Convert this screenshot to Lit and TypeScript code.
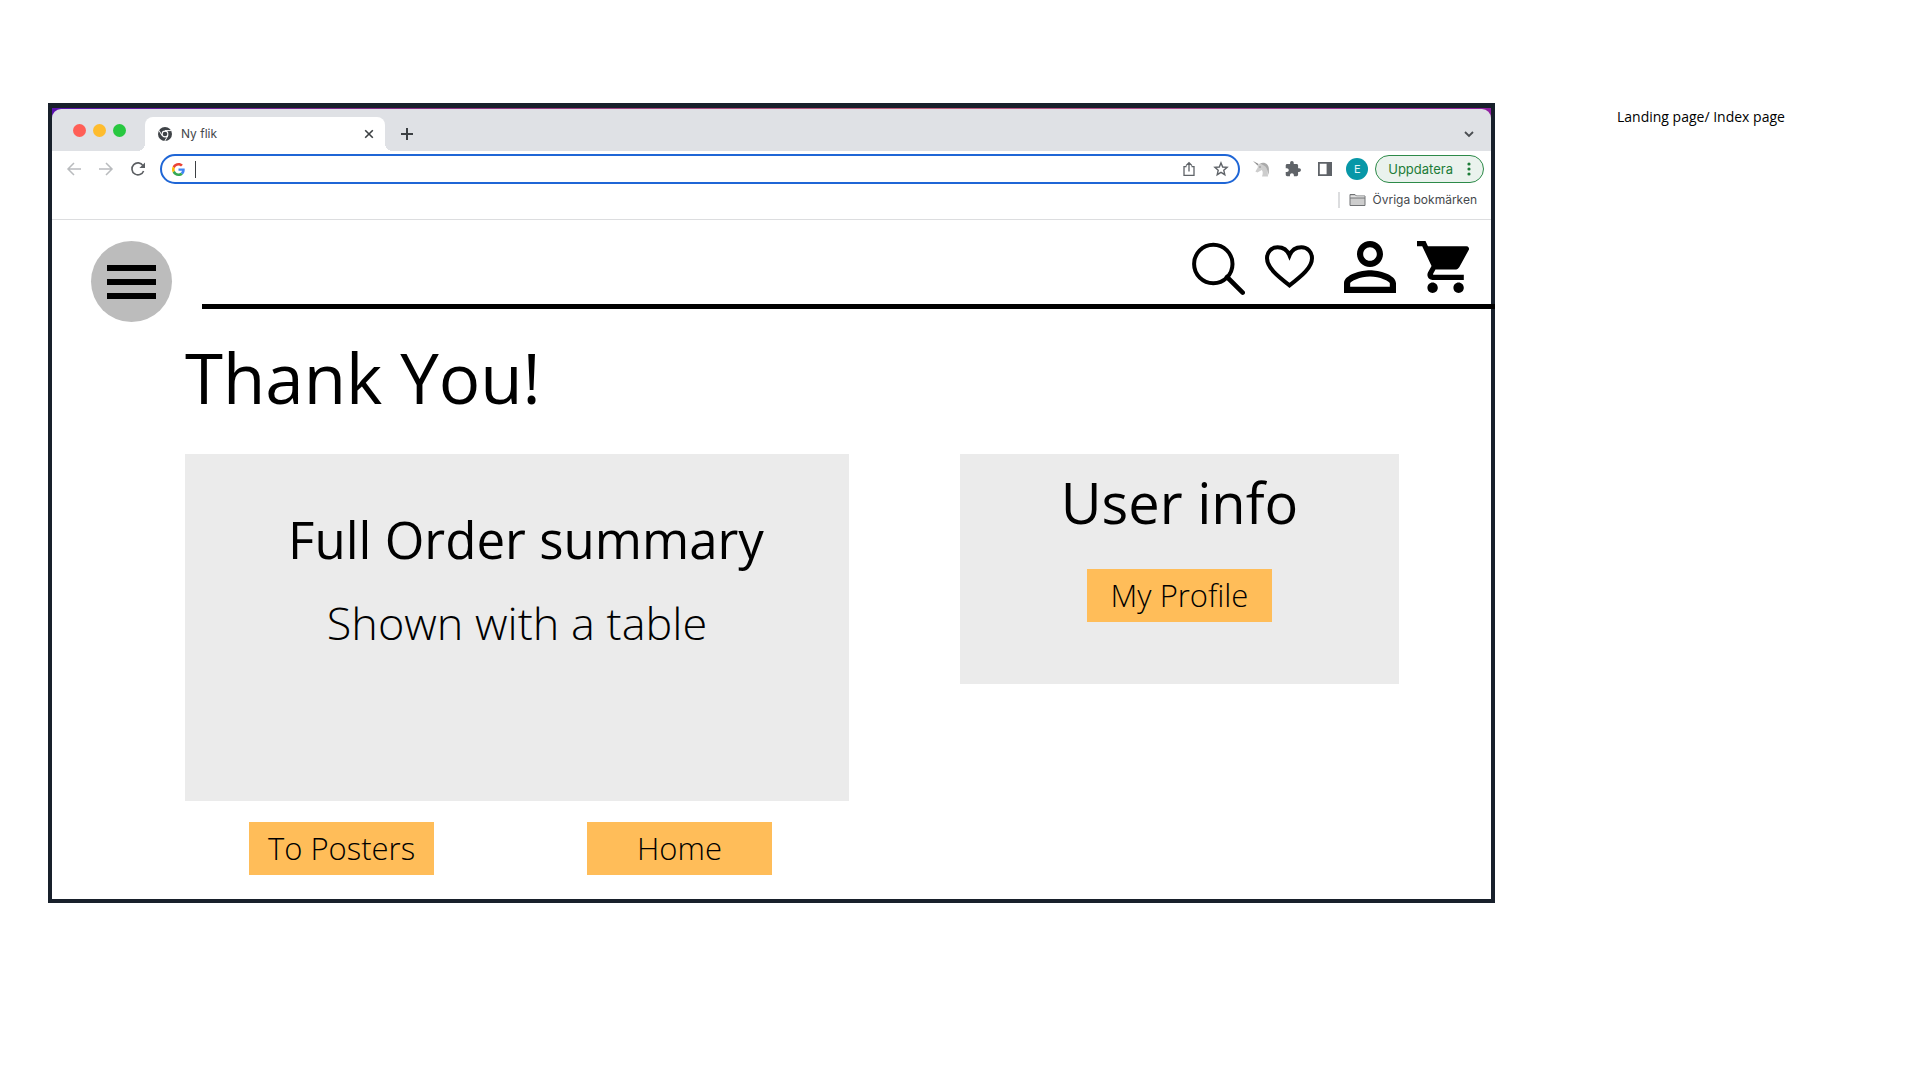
import { LitElement, html, css, svg } from "lit";
import { customElement } from "lit/decorators.js";

@customElement("browser-chrome")
export class BrowserChrome extends LitElement {
  static styles = css`
    :host {
      display: block;
      font-family: Inter, Roboto, "Liberation Sans", sans-serif;
      color: #45484c;
    }
    * {
      box-sizing: border-box;
    }
    button {
      display: flex;
      align-items: center;
      justify-content: center;
      margin: 0;
      padding: 0;
      border: 0;
      background: none;
      color: inherit;
      font: inherit;
    }
    svg {
      display: block;
      flex: none;
    }
    .backdrop {
      padding-top: 1px;
      background: linear-gradient(90deg, #5b12b0, #8a2a86 25%, #c4607c 60%, #8f1fa0);
    }
    .strip {
      display: flex;
      align-items: flex-end;
      height: 42px;
      padding-left: 21px;
      padding-right: 16px;
      border-radius: 9px 9px 0 0;
      background: #dfe1e5;
    }
    .lights {
      display: flex;
      gap: 7px;
      width: 72px;
      align-self: center;
    }
    .light {
      width: 13px;
      height: 13px;
      border-radius: 50%;
    }
    .red {
      background: #ff5f57;
    }
    .yellow {
      background: #febc2e;
    }
    .green {
      background: #28c840;
    }
    .tab {
      position: relative;
      display: flex;
      align-items: center;
      width: 240px;
      height: 34px;
      padding: 0 11px 0 13px;
      border-radius: 8px 8px 0 0;
      background: #fff;
      font-size: 12px;
      line-height: 16px;
    }
    .tab::before,
    .tab::after {
      content: "";
      position: absolute;
      bottom: 0;
      width: 8px;
      height: 8px;
    }
    .tab::before {
      right: 100%;
      background: radial-gradient(circle at 0 0, transparent 8px, #fff 8px);
    }
    .tab::after {
      left: 100%;
      background: radial-gradient(circle at 100% 0, transparent 8px, #fff 8px);
    }
    .tab-title {
      flex: 1;
      padding-left: 9px;
    }
    .new-tab {
      height: 34px;
      margin-left: 15px;
    }
    .tab-list {
      height: 34px;
      margin-left: auto;
    }
    .toolbar {
      display: flex;
      align-items: center;
      height: 36px;
      padding: 0 7px 0 14px;
      background: #fff;
    }
    .nav {
      display: flex;
      gap: 16px;
      width: 94px;
      color: #b9bbbe;
    }
    .reload {
      color: #5b5e62;
    }
    .omnibox {
      display: flex;
      flex: 1;
      align-items: center;
      height: 30px;
      padding: 0 9px 0 10px;
      border: 2px solid #1f66d6;
      border-radius: 15px;
      color: #5f6368;
    }
    .caret {
      width: 1px;
      height: 17px;
      margin-left: 10px;
      background: #3c4043;
    }
    .address {
      flex: 1;
      min-width: 0;
      padding: 0 4px;
      border: 0;
      outline: 0;
      background: none;
      font: inherit;
      font-size: 13px;
    }
    .page-actions {
      display: flex;
      gap: 16px;
    }
    .extensions {
      display: flex;
      align-items: center;
      gap: 16px;
      padding-left: 13px;
      color: #5f6368;
    }
    .avatar {
      width: 22px;
      height: 22px;
      margin: 0 7px 0 13px;
      border-radius: 50%;
      background: #0797a7;
      color: #e6f6f7;
      font-size: 11px;
    }
    .update {
      gap: 14px;
      height: 28px;
      padding: 0 12px;
      border: 1px solid #2c8a48;
      border-radius: 14px;
      background: #eaf2ed;
      color: #1c7c38;
      font-size: 13px;
      line-height: 16px;
    }
    .bookmarks {
      display: flex;
      align-items: center;
      justify-content: flex-end;
      height: 33px;
      padding: 0 14px 6px 0;
      border-bottom: 1px solid #dcdddf;
      background: #fff;
    }
    .divider {
      width: 2px;
      height: 16px;
      margin-right: 9px;
      background: #dcdddf;
    }
    .folder {
      gap: 7px;
      font-size: 12px;
      line-height: 16px;
    }
  `;

  render() {
    return html`
      <div class="backdrop">
        <div class="strip">
          <div class="lights">
            <span class="light red"></span>
            <span class="light yellow"></span>
            <span class="light green"></span>
          </div>
          <div class="tab">
            <svg width="14" height="14" viewBox="0 0 14 14">
              <circle cx="7" cy="7" r="7" fill="#3f4347" />
              <circle cx="7" cy="7" r="3.4" fill="#fff" />
              <path d="M7 3.6H13.2M4.1 8.7L1 3.4M9.900 8.700L6.800 14" stroke="#fff" stroke-width="1" />
              <circle cx="7" cy="7" r="2.3" fill="#3f4347" />
            </svg>
            <span class="tab-title">Ny flik</span>
            <button aria-label="Close tab">
              <svg width="10" height="10" viewBox="0 0 10 10" fill="none" stroke="#3c4043" stroke-width="1.6">
                <path d="M1.2 1.2L8.800 8.800M8.800 1.200L1.200 8.800" />
              </svg>
            </button>
          </div>
          <button class="new-tab" aria-label="New tab">
            <svg width="14" height="14" viewBox="0 0 14 14" fill="none" stroke="#3c4043" stroke-width="2">
              <path d="M7 1V13M1 7H13" />
            </svg>
          </button>
          <button class="tab-list" aria-label="Search tabs">
            <svg width="12" height="10" viewBox="0 0 12 10" fill="none" stroke="#4a4d51" stroke-width="1.8">
              <path d="M2 3L6 7L10 3" />
            </svg>
          </button>
        </div>
      </div>
      <div class="toolbar">
        <div class="nav">
          <button aria-label="Back">
            <svg width="16" height="16" viewBox="0 0 16 16" fill="none" stroke="currentColor" stroke-width="1.5">
              <path d="M15 8H2.400M8 2L2 8L8 14" />
            </svg>
          </button>
          <button aria-label="Forward">
            <svg width="16" height="16" viewBox="0 0 16 16" fill="none" stroke="currentColor" stroke-width="1.5">
              <path d="M1 8H13.600M8 2L14 8L8 14" />
            </svg>
          </button>
          <button class="reload" aria-label="Reload">
            <svg width="16" height="16" viewBox="0 0 16 16" fill="none" stroke="currentColor" stroke-width="1.6">
              <path d="M13 4.600A6 6 0 1 0 13.600 10" />
              <path d="M15 1.400V7H9.400Z" fill="currentColor" stroke="none" />
            </svg>
          </button>
        </div>
        <div class="omnibox">
          <svg width="13" height="13" viewBox="0 0 48 48">
            <path fill="#ea4335" d="M24 9.5c3.54 0 6.71 1.22 9.21 3.6l6.85-6.85C35.9 2.38 30.47 0 24 0 14.62 0 6.51 5.38 2.56 13.22l7.98 6.19C12.43 13.72 17.74 9.5 24 9.5z" />
            <path fill="#4285f4" d="M46.98 24.55c0-1.57-.15-3.09-.38-4.55H24v9.02h12.94c-.58 2.96-2.26 5.48-4.78 7.18l7.73 6c4.51-4.18 7.09-10.36 7.09-17.65z" />
            <path fill="#fbbc05" d="M10.53 28.59c-.48-1.45-.76-2.99-.76-4.59s.27-3.14.76-4.59l-7.98-6.19C.92 16.46 0 20.12 0 24s.92 7.54 2.56 10.78l7.97-6.19z" />
            <path fill="#34a853" d="M24 48c6.48 0 11.93-2.13 15.89-5.81l-7.73-6c-2.15 1.45-4.92 2.3-8.16 2.3-6.26 0-11.57-4.22-13.47-9.91l-7.98 6.19C6.51 42.62 14.62 48 24 48z" />
          </svg>
          <span class="caret"></span>
          <input class="address" type="text" aria-label="Address" />
          <div class="page-actions">
            <button aria-label="Share">
              <svg width="16" height="16" viewBox="0 0 16 16" fill="none" stroke="currentColor" stroke-width="1.3">
                <path d="M5.500 5.600H3V14.400H13V5.600H10.500M8 10.500V2M5 4.600L8 1.600L11 4.600" />
              </svg>
            </button>
            <button aria-label="Bookmark">
              <svg width="16" height="16" viewBox="0 0 16 16" fill="none" stroke="currentColor" stroke-width="1.4">
                <path d="M8 1.900L9.700 6L14.100 6.400L10.800 9.300L11.800 13.700L8 11.400L4.200 13.700L5.200 9.300L1.900 6.400L6.300 6Z" />
              </svg>
            </button>
          </div>
        </div>
        <div class="extensions">
          <button aria-label="Unicorn extension">
            <svg width="16" height="16" viewBox="0 0 16 16">
              <path d="M0 0L5.600 3L4.600 4.600Z" fill="#8a8a8a" />
              <path d="M4.800 3.400L7.600 2.200C11.600 1.800 14 4.600 14.600 8.400L15 15.500H9C10 12.600 10 10.800 8.800 9L4.400 11.600L2.400 10.600L4.800 6.400Z" fill="#cdcdcd" />
              <path d="M7.200 2.200C12 .4 15.800 3.400 15.900 8L15.800 14C14.600 11.600 14.400 7.600 12.400 5.600C11 4.200 9 3.600 7.200 2.200Z" fill="#aaa" />
              <circle cx="7" cy="6" r=".7" fill="#777" />
            </svg>
          </button>
          <button aria-label="Extensions">
            <svg width="16" height="16" viewBox="1 1 22 22" fill="currentColor">
              <path d="M20.500 11H19V7c0-1.100-.9-2-2-2h-4V3.500a2.500 2.500 0 0 0-5 0V5H4c-1.100 0-1.990.9-1.990 2v3.800H3.500c1.490 0 2.700 1.210 2.700 2.700s-1.210 2.700-2.700 2.700H2V20c0 1.100.9 2 2 2h3.800v-1.500c0-1.490 1.210-2.700 2.700-2.700s2.700 1.210 2.700 2.700V22H17c1.100 0 2-.9 2-2v-4h1.500a2.500 2.500 0 0 0 0-5z" />
            </svg>
          </button>
          <button aria-label="Side panel">
            <svg width="16" height="16" viewBox="0 0 16 16">
              <path d="M1.900 1.900H14.100V14.100H1.900Z" fill="none" stroke="currentColor" stroke-width="1.800" />
              <path d="M9.600 1.500H14.500V14.500H9.600Z" fill="currentColor" />
            </svg>
          </button>
        </div>
        <button class="avatar">E</button>
        <button class="update">
          Uppdatera
          <svg width="4" height="14" viewBox="0 0 4 14" fill="currentColor">
            <circle cx="2" cy="2" r="1.600" />
            <circle cx="2" cy="7" r="1.600" />
            <circle cx="2" cy="12" r="1.600" />
          </svg>
        </button>
      </div>
      <div class="bookmarks">
        <span class="divider"></span>
        <button class="folder">
          <svg width="17" height="14" viewBox="0 0 17 14">
            <path d="M1 12.500V1.500H6L7.500 3H16V12.500Z" fill="#cdcdcd" stroke="#707274" />
            <path d="M1.500 3.500H15.500V4.500H1.500Z" fill="#f4f4f4" />
            <path d="M1 5H16" stroke="#707274" />
          </svg>
          Övriga bokmärken
        </button>
      </div>
    `;
  }
}

const navIcons = [
  {
    label: "Search",
    width: 53,
    box: "0 0 53 56",
    art: svg`<g fill="none" stroke="#000"><circle cx="21.300" cy="24" r="19.200" stroke-width="4" /><path d="M35 37L50.700 52.600" stroke-width="4.600" stroke-linecap="round" /></g>`,
  },
  {
    label: "Favourites",
    width: 59,
    box: "0 0 59 56",
    art: svg`<path fill="none" stroke="#000" stroke-width="4" d="M24.500 45.400C12 35.600 2 27.500 2 18.200C2 11.800 6.600 7.200 12.600 7.200C18.200 7.200 22.500 10.400 24.500 15.400C26.500 10.400 30.800 7.200 36.400 7.200C42.400 7.200 47 11.800 47 18.200C47 27.500 37 35.600 24.500 45.400Z" />`,
  },
  {
    label: "Account",
    width: 53,
    box: "4 3.69 16.31 17.23",
    art: svg`<path d="M12 5.900c1.160 0 2.100.94 2.100 2.100s-.94 2.100-2.100 2.100S9.900 9.160 9.900 8s.94-2.100 2.100-2.100m0 9c2.970 0 6.100 1.460 6.100 2.100v1.100H5.900V17c0-.64 3.130-2.100 6.100-2.100M12 4C9.790 4 8 5.790 8 8s1.790 4 4 4 4-1.790 4-4-1.790-4-4-4zm0 9c-2.670 0-8 1.340-8 4v3h16v-3c0-2.660-5.330-4-8-4z" />`,
  },
  {
    label: "Cart",
    width: 52,
    box: "1 1.62 20 21.54",
    art: svg`<path d="M7 18c-1.100 0-1.990.9-1.990 2S5.900 22 7 22s2-.9 2-2-.9-2-2-2zM1 2v2h2l3.600 7.590-1.350 2.450c-.16.28-.25.61-.25.96 0 1.100.9 2 2 2h12v-2H7.420c-.14 0-.25-.11-.25-.25l.03-.12.9-1.630h7.450c.75 0 1.410-.41 1.750-1.030l3.580-6.490A1.003 1.003 0 0 0 20 4H5.210l-.94-2H1zm16 16c-1.100 0-1.990.9-1.990 2s.89 2 1.990 2 2-.9 2-2-.9-2-2-2z" />`,
  },
];

@customElement("app-root")
export class AppRoot extends LitElement {
  static styles = css`
    :host {
      display: flex;
      align-items: flex-start;
      padding: 103px 0 103px 48px;
      background: #fff;
      color: #000;
      font-family: "Open Sans", "Noto Sans", sans-serif;
    }
    * {
      box-sizing: border-box;
    }
    h1,
    h2,
    p {
      margin: 0;
      font-weight: 400;
    }
    button {
      margin: 0;
      padding: 0;
      border: 0;
      background: none;
      color: inherit;
      font: inherit;
    }
    svg {
      display: block;
    }
    .window {
      flex: 1;
      min-width: 0;
      border: 4px solid #18202b;
      border-top-width: 5px;
    }
    .header {
      display: flex;
      align-items: flex-start;
      gap: 30px;
      margin-right: -4px;
      padding-left: 39px;
    }
    .menu {
      display: flex;
      flex-direction: column;
      align-items: center;
      justify-content: center;
      gap: 8px;
      width: 81px;
      height: 81px;
      margin-top: 21px;
      border-radius: 50%;
      background: #bcbcbc;
    }
    .bar {
      width: 49px;
      height: 6px;
      background: #000;
    }
    .icons {
      display: flex;
      flex: 1;
      justify-content: flex-end;
      gap: 20px;
      padding: 20px 26px 8px 0;
      border-bottom: 5px solid #000;
    }
    .content {
      padding: 15px 92px 24px 133px;
    }
    .title {
      margin-bottom: 37px;
      font-size: 69px;
      line-height: 80px;
    }
    .columns {
      display: grid;
      grid-template-columns: 664fr 439fr;
      align-items: start;
      gap: 111px;
    }
    .card {
      display: flex;
      flex-direction: column;
      align-items: center;
      background: #ebebeb;
    }
    .order {
      gap: 22px;
      min-height: 347px;
      padding: 53px 0 0;
    }
    .order-title {
      padding-left: 18px;
      font-size: 51px;
      line-height: 64px;
    }
    .order-text {
      font-size: 45px;
      line-height: 60px;
      font-weight: 300;
    }
    .user {
      gap: 35px;
      min-height: 230px;
      padding-top: 16px;
    }
    .user-title {
      font-size: 56px;
      line-height: 64px;
    }
    .action {
      display: block;
      width: 185px;
      background: #ffbd59;
      color: #000;
      font-size: 31px;
      font-weight: 300;
      line-height: 53px;
      text-align: center;
      text-decoration: none;
    }
    .actions {
      display: flex;
      justify-content: space-between;
      padding: 21px 77px 0 64px;
    }
    .note {
      width: 425px;
      padding: 4px 0 0 122px;
      font-size: 14px;
      line-height: 20px;
    }
  `;

  render() {
    return html`
      <div class="window">
        <browser-chrome></browser-chrome>
        <header class="header">
          <button class="menu" aria-label="Menu">
            <span class="bar"></span>
            <span class="bar"></span>
            <span class="bar"></span>
          </button>
          <nav class="icons">
            ${navIcons.map(
              (icon) => html`<button aria-label=${icon.label}>
                <svg width=${icon.width} height="56" viewBox=${icon.box}>${icon.art}</svg>
              </button>`
            )}
          </nav>
        </header>
        <main class="content">
          <h1 class="title">Thank You!</h1>
          <div class="columns">
            <div>
              <section class="card order">
                <h2 class="order-title">Full Order summary</h2>
                <p class="order-text">Shown with a table</p>
              </section>
              <div class="actions">
                <a class="action" href="#posters">To Posters</a>
                <a class="action" href="#home">Home</a>
              </div>
            </div>
            <section class="card user">
              <h2 class="user-title">User info</h2>
              <a class="action" href="#profile">My Profile</a>
            </section>
          </div>
        </main>
      </div>
      <aside class="note">Landing page/ Index page</aside>
    `;
  }
}
